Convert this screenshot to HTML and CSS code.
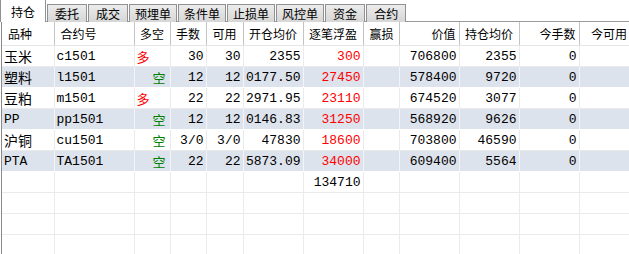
FILE: index.html
```html
<!DOCTYPE html>
<html lang="zh">
<head>
    <meta charset="UTF-8">
    <title>持仓</title>
    <link rel="stylesheet" href="styles.css">
</head>
<body>
    <div class="tabs">
        <div class="tab active">持仓</div>
        <div class="tab">委托</div>
        <div class="tab">成交</div>
        <div class="tab w3">预埋单</div>
        <div class="tab w3">条件单</div>
        <div class="tab w3">止损单</div>
        <div class="tab w3">风控单</div>
        <div class="tab">资金</div>
        <div class="tab">合约</div>
    </div>

    <div class="grid">
        <table>
            <colgroup>
                <col style="width:52px"><col style="width:80px"><col style="width:36px">
                <col style="width:36px"><col style="width:37px"><col style="width:60px">
                <col style="width:60px"><col style="width:36px"><col style="width:60px">
                <col style="width:60px"><col style="width:60px"><col style="width:60px">
            </colgroup>
            <thead>
                <tr>
                    <th class="l">品种</th>
                    <th class="l">合约号</th>
                    <th>多空</th>
                    <th>手数</th>
                    <th>可用</th>
                    <th>开仓均价</th>
                    <th>逐笔浮盈</th>
                    <th class="l">赢损</th>
                    <th class="r">价值</th>
                    <th>持仓均价</th>
                    <th class="r">今手数</th>
                    <th>今可用</th>
                </tr>
            </thead>
            <tbody>
                <tr>
                    <td class="l cn">玉米</td><td class="l">c1501</td><td class="l long">多</td>
                    <td>30</td><td>30</td><td>2355</td><td class="up">300</td><td></td>
                    <td>706800</td><td>2355</td><td>0</td><td></td>
                </tr>
                <tr class="alt">
                    <td class="l cn">塑料</td><td class="l">l1501</td><td class="short">空</td>
                    <td>12</td><td>12</td><td>0177.50</td><td class="up">27450</td><td></td>
                    <td>578400</td><td>9720</td><td>0</td><td></td>
                </tr>
                <tr>
                    <td class="l cn">豆粕</td><td class="l">m1501</td><td class="l long">多</td>
                    <td>22</td><td>22</td><td>2971.95</td><td class="up">23110</td><td></td>
                    <td>674520</td><td>3077</td><td>0</td><td></td>
                </tr>
                <tr class="alt">
                    <td class="l">PP</td><td class="l">pp1501</td><td class="short">空</td>
                    <td>12</td><td>12</td><td>0146.83</td><td class="up">31250</td><td></td>
                    <td>568920</td><td>9626</td><td>0</td><td></td>
                </tr>
                <tr>
                    <td class="l cn">沪铜</td><td class="l">cu1501</td><td class="short">空</td>
                    <td>3/0</td><td>3/0</td><td>47830</td><td class="up">18600</td><td></td>
                    <td>703800</td><td>46590</td><td>0</td><td></td>
                </tr>
                <tr class="alt">
                    <td class="l">PTA</td><td class="l">TA1501</td><td class="short">空</td>
                    <td>22</td><td>22</td><td>5873.09</td><td class="up">34000</td><td></td>
                    <td>609400</td><td>5564</td><td>0</td><td></td>
                </tr>
                <tr>
                    <td></td><td></td><td></td><td></td><td></td><td></td>
                    <td>134710</td><td></td><td></td><td></td><td></td><td></td>
                </tr>
                <tr><td></td><td></td><td></td><td></td><td></td><td></td><td></td><td></td><td></td><td></td><td></td><td></td></tr>
                <tr><td></td><td></td><td></td><td></td><td></td><td></td><td></td><td></td><td></td><td></td><td></td><td></td></tr>
                <tr><td></td><td></td><td></td><td></td><td></td><td></td><td></td><td></td><td></td><td></td><td></td><td></td></tr>
            </tbody>
        </table>
    </div>
</body>
</html>
```

FILE: styles.css
```css
body {
    margin: 0;
    width: 629px;
    height: 254px;
    overflow: hidden;
    background: #fff;
    font-family: "Noto Sans CJK SC", sans-serif;
}
.tabs {
    display: flex;
    align-items: flex-end;
    gap: 1px;
    height: 21px;
    border-bottom: 1px solid #9a9a9a;
}
.tab {
    height: 17px;
    padding: 0 7px;
    margin-bottom: -1px;
    border: 1px solid #919191;
    border-bottom: none;
    background: linear-gradient(#ececec, #d6d6d6);
    font-size: 12px;
    line-height: 18px;
    color: #000;
    white-space: nowrap;
}
.tab.w3 {
    padding: 0 5px;
}
.tab.active {
    height: 22px;
    padding: 0 10px;
    background: #fff;
    font-size: 12px;
    line-height: 23px;
}
.grid {
    margin-left: 1px;
    border-left: 1px solid #8a8a8a;
    height: 232px;
    overflow: hidden;
}
table {
    table-layout: fixed;
    border-collapse: collapse;
    width: 637px;
}
th {
    height: 23px;
    padding: 0 3px;
    font-size: 12px;
    font-weight: normal;
    text-align: center;
    border-right: 1px solid #c4c4c4;
    border-bottom: 1px solid #e6e6e6;
    white-space: nowrap;
    overflow: hidden;
}
td {
    height: 20px;
    padding: 0 2px;
    font-family: "Liberation Mono", "Noto Sans CJK SC", monospace;
    font-size: 13px;
    text-align: right;
    border-right: 1px solid #ebebeb;
    border-bottom: 1px solid #ebebeb;
    white-space: nowrap;
    overflow: hidden;
}
td.cn {
    font-size: 14px;
}
.l {
    text-align: left;
}
th.l {
    padding-left: 6px;
}
.r {
    text-align: right;
}
tr.alt td {
    background: #dde3ec;
    border-right-color: #f2f4f7;
    border-bottom-color: #fff;
}
.long {
    color: #ff0000;
}
.short {
    color: #008000;
    padding-right: 4px;
}
.up {
    color: #ff0000;
}
```
